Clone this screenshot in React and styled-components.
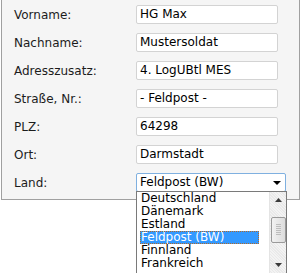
import React from 'react';
import styled, { createGlobalStyle } from 'styled-components';

const GlobalStyle = createGlobalStyle`
  body {
    margin: 0;
    background: #ffffff;
    font-family: 'DejaVu Sans', Verdana, sans-serif;
  }
`;

const Page = styled.div`
  position: relative;
  width: 302px;
  height: 273px;
  overflow: hidden;
`;

const Panel = styled.div`
  box-sizing: border-box;
  width: 299px;
  margin-left: 1px;
  padding: 5px 0 7px 12px;
  background: #f5f5f5;
  border: 1px solid #a0a0a0;
  border-top: none;
  display: flex;
  flex-direction: column;
  gap: 9px;
`;

const Row = styled.div`
  display: grid;
  grid-template-columns: 122px auto;
  align-items: center;
  height: 19px;
`;

const Label = styled.label`
  font-size: 12px;
  color: #1c1c1c;
  padding-top: 1px;
`;

const Input = styled.div`
  box-sizing: border-box;
  width: ${(props) => props.width || 142}px;
  height: 19px;
  padding: 0 4px 0 3px;
  background: #ffffff;
  border: 1px solid ${(props) => props.border || '#d3d3d3'};
  border-radius: 2px;
  font-size: 12px;
  line-height: 17px;
  color: #000000;
  display: flex;
  align-items: center;
  justify-content: space-between;
  white-space: nowrap;
`;

const Caret = styled.span`
  width: 0;
  height: 0;
  border-left: 4px solid transparent;
  border-right: 4px solid transparent;
  border-top: 4px solid #000000;
`;

const DropList = styled.div`
  position: absolute;
  left: 136px;
  top: 191px;
  box-sizing: border-box;
  width: 151px;
  height: 82px;
  background: #ffffff;
  border: 1px solid #7a7a7a;
  border-bottom: none;
  display: flex;
`;

const Options = styled.div`
  flex: 1;
  padding-left: 3px;
  padding-right: 10px;
  display: flex;
  flex-direction: column;
`;

const Option = styled.div`
  box-sizing: border-box;
  height: 13px;
  padding-left: 1px;
  font-size: 12px;
  line-height: 12px;
  white-space: nowrap;
  color: ${(props) => (props.selected ? '#ffffff' : '#000000')};
  background: ${(props) => (props.selected ? '#3399ff' : 'transparent')};
  outline: ${(props) => (props.selected ? '1px dotted #b06a2a' : 'none')};
  outline-offset: -1px;
`;

const Scrollbar = styled.div`
  width: 16px;
  display: flex;
  flex-direction: column;
  align-items: center;
  background: repeating-linear-gradient(45deg, #f3f3f3 0 1px, #e9e9e9 1px 2px);
  border-left: 1px solid #e4e4e4;
`;

const ArrowButton = styled.div`
  height: 16px;
  width: 16px;
  display: flex;
  align-items: center;
  justify-content: center;
`;

const Thumb = styled.div`
  box-sizing: border-box;
  width: 15px;
  height: 26px;
  margin-top: 9px;
  margin-bottom: auto;
  border: 1px solid #9a9a9a;
  border-radius: 2px;
  background: linear-gradient(to right, #f2f2f2, #dcdcdc);
  display: flex;
  align-items: center;
  justify-content: center;
`;

const Grip = styled.div`
  width: 5px;
  height: 12px;
  background: repeating-linear-gradient(to bottom, #bdbdbd 0 1px, transparent 1px 2px);
`;

const Arrow = ({ down }) => (
  <svg width="7" height="4" viewBox="0 0 7 4">
    <polygon points={down ? '0,0 7,0 3.5,4' : '0,4 7,4 3.5,0'} fill="#3a3a3a" />
  </svg>
);

const fields = [
  { label: 'Vorname:', value: 'HG Max' },
  { label: 'Nachname:', value: 'Mustersoldat' },
  { label: 'Adresszusatz:', value: '4. LogUBtl MES' },
  { label: 'Straße, Nr.:', value: '- Feldpost -' },
  { label: 'PLZ:', value: '64298' },
  { label: 'Ort:', value: 'Darmstadt' },
];

const countries = ['Deutschland', 'Dänemark', 'Estland', 'Feldpost (BW)', 'Finnland', 'Frankreich'];

const App = () => (
  <Page>
    <GlobalStyle />
    <Panel>
      {fields.map((f) => (
        <Row key={f.label}>
          <Label>{f.label}</Label>
          <Input>{f.value}</Input>
        </Row>
      ))}
      <Row>
        <Label>Land:</Label>
        <Input width={150} border="#7fb0e0">
          Feldpost (BW)
          <Caret />
        </Input>
      </Row>
    </Panel>
    <DropList>
      <Options>
        {countries.map((c) => (
          <Option key={c} selected={c === 'Feldpost (BW)'}>
            {c}
          </Option>
        ))}
      </Options>
      <Scrollbar>
        <ArrowButton>
          <Arrow />
        </ArrowButton>
        <Thumb>
          <Grip />
        </Thumb>
        <ArrowButton>
          <Arrow down />
        </ArrowButton>
      </Scrollbar>
    </DropList>
  </Page>
);

export default App;
